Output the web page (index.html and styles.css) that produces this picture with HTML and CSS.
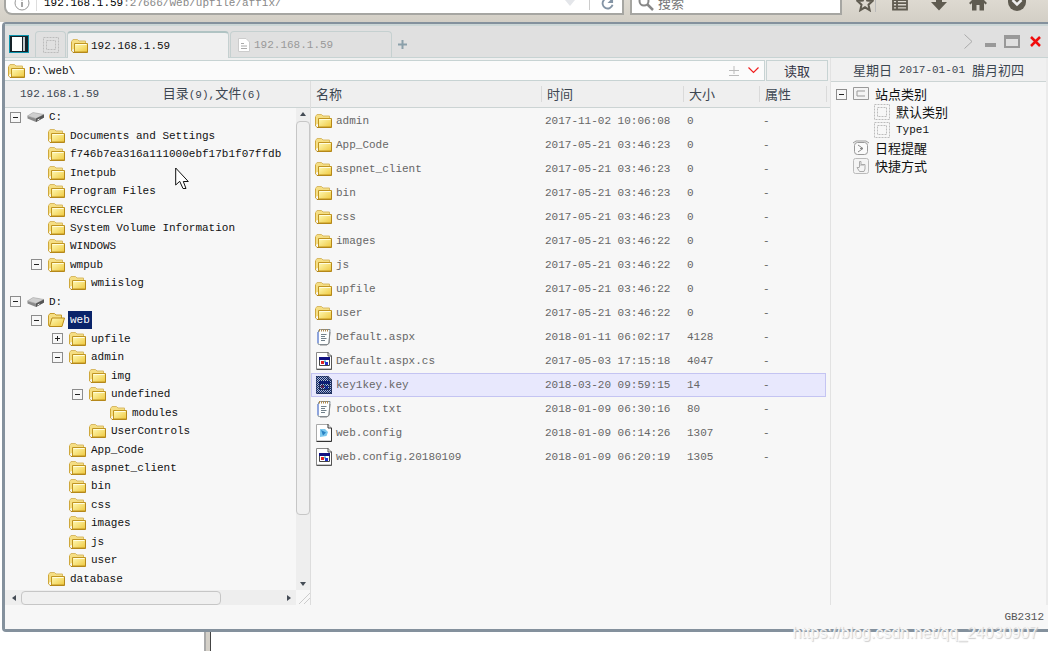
FILE: index.html
```html
<!DOCTYPE html>
<html lang="zh-CN">
<head>
<meta charset="utf-8">
<title>D:\web\</title>
<link rel="stylesheet" href="styles.css">
</head>
<body>
<svg class="sprite" aria-hidden="true">
  <defs>
    <linearGradient id="gold" x1="0" y1="0" x2="1" y2="1"><stop offset="0" stop-color="#fffbb8"/><stop offset="1" stop-color="#efc83e"/></linearGradient>
    <pattern id="dither" width="2" height="2" patternUnits="userSpaceOnUse"><path fill="#0a246a" d="M0 0h1v1H0zM1 1h1v1H1z"/></pattern>
  </defs>
  <symbol id="folder" viewBox="0 0 17 16">
    <path d="M.5 12V3.500L2 1.500h4.500L8 3h6.500v3" fill="#f5de83" stroke="#d8b965"/>
    <path d="M.5 4v9l2 1.500" fill="none" stroke="#cfa83c"/>
    <path d="M3.500 5.500h13v8.500h-13z" fill="url(#gold)" stroke="#c19521"/>
    <path d="M4.500 6.500h11" stroke="#fffde0"/>
    <path d="M2 14.500h14.500v-8" fill="none" stroke="#b5881a"/>
  </symbol>
  <symbol id="folder-open" viewBox="0 0 17 16">
    <path d="M.5 13V3.500L2 1.500h4.500L8 3h5.500v3L12 14H1z" fill="#f5de83" stroke="#c79d2d"/>
    <path d="M4 6h12.500l-2.500 8.500H1.500z" fill="url(#gold)" stroke="#b98a18"/>
  </symbol>
  <symbol id="drive" viewBox="0 0 18 12">
    <path d="M.5 5L6 2l11 1.500v3L9 11 .5 7.500z" fill="#8b8b8b"/>
    <path d="M.5 5L6 1.500 17 3.500 9 7.500z" fill="#cfcfcf" stroke="#aaa" stroke-width=".6"/>
    <path d="M9 7.500V11l8-4.500v-3z" fill="#555"/><path d="M10.500 9l2-1" stroke="#eee"/>
  </symbol>
  <symbol id="note" viewBox="0 0 16 18">
    <path d="M2.500 3Q3 1.500 4.500 1.500H14l-1 13.500q-.2 1.500-2 1.500H3.500Q1.500 16.500 2 15z" fill="#fdfefe" stroke="#7a8a95"/>
    <path d="M2 4v11" stroke="#8ea4dc" stroke-width="2"/>
    <path d="M3.500 1v2.500M5.500 1v2.500M7.500 1v2.500M9.500 1v2.500M11.500 1v2.500" stroke="#b08a50"/>
    <path d="M5 6.500h5.500M5 8.500h4M5 10.500h5.500M5 12.500h4" stroke="#71808a"/>
    <path d="M14 4l-1 11-2 2H4" fill="none" stroke="#888"/>
  </symbol>
  <symbol id="app" viewBox="0 0 16 18">
    <path d="M.5.5H12L15.500 4v13H.5z" fill="#fff" stroke="#888"/>
    <path d="M12 0v4h4M15.500 4v13.500H.5" fill="none" stroke="#555"/>
    <path d="M3.500 5.500h10v8h-10z" fill="#fff" stroke="#444"/><path d="M3 5h11v3H3z" fill="#101080"/>
    <path d="M5 9h3v3H5z" fill="#d22"/><path d="M8 8.500h2v2H8z" fill="#4bb8c8"/><path d="M9 10h3v3H9z" fill="#2233cc"/>
  </symbol>
  <symbol id="app-picked" viewBox="0 0 16 18"><use href="#app" width="16" height="18"/><path d="M0 0h12l4 4v14H0z" fill="#0a246a" opacity=".3"/><path d="M0 0h12l4 4v14H0z" fill="url(#dither)"/></symbol>
  <symbol id="config" viewBox="0 0 16 18">
    <path d="M.5.5H12L15.500 4v13H.5z" fill="#fff" stroke="#aaa"/><path d="M12 0v4h3.500v13.500H.5" fill="none" stroke="#333"/>
    <path d="M4 5h5l3 3-1.500 4L4 13z" fill="#7cc8ee"/><path d="M5 6l5 2.500-3 3z" fill="#2a82c4"/>
  </symbol>
  <symbol id="dotted" viewBox="0 0 16 16">
    <path d="M.5.5h15v15H.5z" fill="none" stroke="#bcbcbc" stroke-dasharray="2 1"/><path d="M3.500 3.500h9v9h-9z" fill="none" stroke="#bcbcbc" stroke-dasharray="2 1"/>
  </symbol>
</svg>

<header class="browser">
  <div class="address">
    <svg class="info" viewBox="0 0 16 16"><circle cx="8" cy="8" r="7" fill="none" stroke="#999"/><path d="M8 3.500v2M8 7v5" stroke="#888" stroke-width="1.500"/></svg>
    <span class="url"><b>192.168.1.59</b>:27666/web/upfile/affix/</span>
    <svg class="drop" viewBox="0 0 10 8"><path d="M0 1h10L5 7z" fill="#e4e6ea"/></svg>
    <button class="reload" aria-label="刷新"><svg viewBox="0 0 14 14"><path d="M11.500 4A5.500 5.500 0 1 0 12.500 9" fill="none" stroke="#8494a5" stroke-width="2"/><path d="M13 1v6H7z" fill="#8494a5"/></svg></button>
  </div>
  <label class="search"><svg viewBox="0 0 16 16"><circle cx="6" cy="6" r="4.500" fill="none" stroke="#888" stroke-width="2"/><path d="M9.500 9.500L15 15" stroke="#888" stroke-width="2.500"/></svg><input type="text" placeholder="搜索" aria-label="搜索"></label>
  <nav class="tools">
    <button aria-label="收藏"><svg viewBox="0 0 18 18"><path d="M9 1.500l2.200 5 5.300.5-4 3.700 1.200 5.500L9 13.300l-4.700 2.900 1.200-5.500-4-3.700 5.300-.5z" fill="none" stroke="#5f5b50" stroke-width="2"/></svg></button>
    <button aria-label="书签"><svg viewBox="0 0 18 18"><path d="M2 1.500h14v14H2zM2 6h14M2 9.200h14M2 12.400h14M6 2v13" fill="none" stroke="#5f5b50" stroke-width="1.800"/></svg></button>
    <button aria-label="下载"><svg viewBox="0 0 18 18"><path d="M6 0h6v8h5l-8 8.500L1 8h5z" fill="#5f5b50"/></svg></button>
    <button aria-label="主页"><svg viewBox="0 0 18 18"><path d="M9 0l9 9-1.500 1.500L15 9v7.500h-4.500V11h-3v5.500H3V9l-1.500 1.500L0 9z" fill="#5f5b50"/></svg></button>
    <button aria-label="更多"><svg viewBox="0 0 18 18"><path d="M0 0h18v8a9 9 0 0 1-18 0z" fill="#5f5b50"/><path d="M4.500 6L9 10.500 13.500 6" fill="none" stroke="#eee" stroke-width="2.500"/></svg></button>
  </nav>
</header>

<main class="window">
  <div class="titlebar">
    <button class="toggle-pane" aria-label="侧栏"><svg viewBox="0 0 20 18"><path d="M0 0h20v18H0z" fill="#0c93ad"/><path d="M1 1h18v16H1z" fill="#152128"/><path d="M3 2h10v14H3z" fill="#fff"/><path d="M14 2h2v14h-2z" fill="#c4cacd"/></svg></button>
    <button class="tab small" aria-label="站点"><svg class="i16"><use href="#dotted"/></svg></button>
    <button class="tab active"><svg class="i17"><use href="#folder"/></svg>192.168.1.59</button>
    <button class="tab idle"><svg class="page" viewBox="0 0 12 14"><path d="M.5.5H8L11.500 4v9.500H.5z" fill="#fff" stroke="#ccc"/><path d="M3 5.500h3M3 8h6M3 10.500h6" stroke="#aaa"/></svg>192.168.1.59</button>
    <button class="add" aria-label="新建"><svg viewBox="0 0 9 9"><path d="M4.500 0v9M0 4.500h9" stroke="#8ba0aa" stroke-width="2"/></svg></button>
    <div class="controls">
      <button aria-label="下一个"><svg width="9" height="15" viewBox="0 0 9 15"><path d="M.5.5l7.500 7-7.500 7" fill="none" stroke="#aaa"/></svg></button>
      <button aria-label="最小化"><svg width="11" height="15" viewBox="0 0 11 15"><path d="M0 9h11v4H0z" fill="#999"/></svg></button>
      <button aria-label="最大化"><svg width="16" height="13" viewBox="0 0 16 13"><path d="M1 1h14v11H1z" fill="none" stroke="#999" stroke-width="2"/><path d="M0 0h16v4H0z" fill="#999"/></svg></button>
      <button aria-label="关闭"><svg width="11" height="11" viewBox="0 0 11 11"><path d="M1 1l9 9M10 1l-9 9" stroke="#f00c0c" stroke-width="2.500"/></svg></button>
    </div>
  </div>

  <div class="content">
    <section class="files">
      <div class="pathbar">
        <div class="path">
          <svg class="i17"><use href="#folder"/></svg>
          <input type="text" value="D:\web\" aria-label="路径">
          <svg class="plusminus" viewBox="0 0 10 12"><path d="M5 1v8M0 5.500h10M0 10.500h10" fill="none" stroke="#bbb"/></svg>
          <button class="chev" aria-label="历史"><svg viewBox="0 0 11 7"><path d="M.5.5l5 5 5-5" fill="none" stroke="#f02020" stroke-width="1.200"/></svg></button>
        </div>
        <button class="read">读取</button>
      </div>
      <div class="panes">
        <div class="left">
          <div class="left-head"><span>192.168.1.59</span><span><i>目录</i>(9),<i>文件</i>(6)</span></div>
          <div class="scroller">
            <ul class="tree">
              <li class="l0"><button class="box" aria-label="折叠"></button><svg class="drive"><use href="#drive"/></svg><span>C:</span></li>
              <li class="l1"><svg class="i17"><use href="#folder"/></svg><span>Documents and Settings</span></li>
              <li class="l1"><svg class="i17"><use href="#folder"/></svg><span>f746b7ea316a111000ebf17b1f07ffdb</span></li>
              <li class="l1"><svg class="i17"><use href="#folder"/></svg><span>Inetpub</span></li>
              <li class="l1"><svg class="i17"><use href="#folder"/></svg><span>Program Files</span></li>
              <li class="l1"><svg class="i17"><use href="#folder"/></svg><span>RECYCLER</span></li>
              <li class="l1"><svg class="i17"><use href="#folder"/></svg><span>System Volume Information</span></li>
              <li class="l1"><svg class="i17"><use href="#folder"/></svg><span>WINDOWS</span></li>
              <li class="l1"><button class="box" aria-label="折叠"></button><svg class="i17"><use href="#folder"/></svg><span>wmpub</span></li>
              <li class="l2"><svg class="i17"><use href="#folder"/></svg><span>wmiislog</span></li>
              <li class="l0"><button class="box" aria-label="折叠"></button><svg class="drive"><use href="#drive"/></svg><span>D:</span></li>
              <li class="l1"><button class="box" aria-label="折叠"></button><svg class="i17"><use href="#folder-open"/></svg><span class="chosen">web</span></li>
              <li class="l2"><button class="box plus" aria-label="展开"></button><svg class="i17"><use href="#folder"/></svg><span>upfile</span></li>
              <li class="l2"><button class="box" aria-label="折叠"></button><svg class="i17"><use href="#folder"/></svg><span>admin</span></li>
              <li class="l3"><svg class="i17"><use href="#folder"/></svg><span>img</span></li>
              <li class="l3"><button class="box" aria-label="折叠"></button><svg class="i17"><use href="#folder"/></svg><span>undefined</span></li>
              <li class="l4"><svg class="i17"><use href="#folder"/></svg><span>modules</span></li>
              <li class="l3"><svg class="i17"><use href="#folder"/></svg><span>UserControls</span></li>
              <li class="l2"><svg class="i17"><use href="#folder"/></svg><span>App_Code</span></li>
              <li class="l2"><svg class="i17"><use href="#folder"/></svg><span>aspnet_client</span></li>
              <li class="l2"><svg class="i17"><use href="#folder"/></svg><span>bin</span></li>
              <li class="l2"><svg class="i17"><use href="#folder"/></svg><span>css</span></li>
              <li class="l2"><svg class="i17"><use href="#folder"/></svg><span>images</span></li>
              <li class="l2"><svg class="i17"><use href="#folder"/></svg><span>js</span></li>
              <li class="l2"><svg class="i17"><use href="#folder"/></svg><span>user</span></li>
              <li class="l1"><svg class="i17"><use href="#folder"/></svg><span>database</span></li>
            </ul>
            <div class="vbar"><svg viewBox="0 0 6 4"><path d="M0 4l3-4 3 4z" fill="#444b55"/></svg><div class="vthumb"></div><svg viewBox="0 0 6 4"><path d="M0 0l3 4 3-4z" fill="#444b55"/></svg></div>
            <div class="hbar"><svg viewBox="0 0 4 6"><path d="M4 0L0 3l4 3z" fill="#444b55"/></svg><div class="hthumb"></div><svg viewBox="0 0 4 6"><path d="M0 0l4 3-4 3z" fill="#444b55"/></svg></div>
            <svg class="grip" viewBox="0 0 14 14"><path d="M3 14L14 3M8 14l6-6" stroke="#ccc"/></svg>
          </div>
        </div>
        <div class="list">
          <table>
            <colgroup><col><col class="c-time"><col class="c-size"><col class="c-attr"><col class="c-end"></colgroup>
            <thead><tr><th><span>名称</span></th><th><span>时间</span></th><th><span>大小</span></th><th><span>属性</span></th><th><span></span></th></tr></thead>
            <tbody>
              <tr><td><svg class="i17"><use href="#folder"/></svg>admin</td><td>2017-11-02 10:06:08</td><td>0</td><td>-</td></tr>
              <tr><td><svg class="i17"><use href="#folder"/></svg>App_Code</td><td>2017-05-21 03:46:23</td><td>0</td><td>-</td></tr>
              <tr><td><svg class="i17"><use href="#folder"/></svg>aspnet_client</td><td>2017-05-21 03:46:23</td><td>0</td><td>-</td></tr>
              <tr><td><svg class="i17"><use href="#folder"/></svg>bin</td><td>2017-05-21 03:46:23</td><td>0</td><td>-</td></tr>
              <tr><td><svg class="i17"><use href="#folder"/></svg>css</td><td>2017-05-21 03:46:23</td><td>0</td><td>-</td></tr>
              <tr><td><svg class="i17"><use href="#folder"/></svg>images</td><td>2017-05-21 03:46:22</td><td>0</td><td>-</td></tr>
              <tr><td><svg class="i17"><use href="#folder"/></svg>js</td><td>2017-05-21 03:46:22</td><td>0</td><td>-</td></tr>
              <tr><td><svg class="i17"><use href="#folder"/></svg>upfile</td><td>2017-05-21 03:46:22</td><td>0</td><td>-</td></tr>
              <tr><td><svg class="i17"><use href="#folder"/></svg>user</td><td>2017-05-21 03:46:22</td><td>0</td><td>-</td></tr>
              <tr><td><svg class="doc"><use href="#note"/></svg>Default.aspx</td><td>2018-01-11 06:02:17</td><td>4128</td><td>-</td></tr>
              <tr><td><svg class="doc"><use href="#app"/></svg>Default.aspx.cs</td><td>2017-05-03 17:15:18</td><td>4047</td><td>-</td></tr>
              <tr class="hot"><td><svg class="doc"><use href="#app-picked"/></svg>key1key.key</td><td>2018-03-20 09:59:15</td><td>14</td><td>-</td></tr>
              <tr><td><svg class="doc"><use href="#note"/></svg>robots.txt</td><td>2018-01-09 06:30:16</td><td>80</td><td>-</td></tr>
              <tr><td><svg class="doc"><use href="#config"/></svg>web.config</td><td>2018-01-09 06:14:26</td><td>1307</td><td>-</td></tr>
              <tr><td><svg class="doc"><use href="#app"/></svg>web.config.20180109</td><td>2018-01-09 06:20:19</td><td>1305</td><td>-</td></tr>
            </tbody>
          </table>
        </div>
      </div>
    </section>
    <aside class="side">
      <div class="date"><i>星期日</i> 2017-01-01 <i>腊月初四</i></div>
      <ul class="sites">
        <li><button class="box" aria-label="折叠"></button><svg class="i16" viewBox="0 0 16 16"><path d="M.5 1.500h15v12H.5z" fill="#f4f4f4" stroke="#999"/><path d="M12 5H4v5h8" fill="none" stroke="#999"/></svg><i>站点类别</i></li>
        <li class="sub"><svg class="i16"><use href="#dotted"/></svg><i>默认类别</i></li>
        <li class="sub"><svg class="i16"><use href="#dotted"/></svg>Type1</li>
        <li class="plain"><svg class="i16" viewBox="0 0 16 16"><rect x="1.500" y="2.500" width="13" height="12" rx="3" fill="#fafafa" stroke="#999"/><path d="M0 3l3-2h10l3 2" fill="none" stroke="#999"/><path d="M5 5l5 3.500L5 12M10 8.500H7" fill="none" stroke="#888"/></svg><i>日程提醒</i></li>
        <li class="plain"><svg class="i16" viewBox="0 0 16 16"><rect x=".5" y=".5" width="15" height="15" rx="2" fill="#f4f4f4" stroke="#bbb"/><path d="M6.500 9V3.500h1.500V8M8 6.500h2V8M10 6.500h2V11l-1 2.500H6.500L4 9.500h2.500" fill="none" stroke="#aaa"/></svg><i>快捷方式</i></li>
      </ul>
    </aside>
  </div>
  <footer class="status">GB2312</footer>
</main>
<div class="below"><div class="divider"></div></div>
<svg class="cursor" viewBox="0 0 14 23"><path d="M.7 1v17l4-3.700L8 21.500h3l-2.700-7h5z" fill="#fff" stroke="#111"/></svg>
<div class="watermark">https://blog.csdn.net/qq_24030907</div>
</body>
</html>
```

FILE: styles.css
```css
* { box-sizing: border-box; }
body {
  margin: 0;
  height: 100vh;
  display: flex;
  flex-direction: column;
  overflow: hidden;
  background: #fff;
  color: #111;
  font: 11px/16px "Liberation Mono", "Noto Sans CJK SC", monospace;
}
svg { display: block; flex: none; }
i { font: 13px/16px "Noto Sans CJK SC", sans-serif; }
ul { list-style: none; margin: 0; padding: 0; }
button { border: 0; padding: 0; background: none; font: inherit; color: inherit; display: flex; align-items: center; }
input { border: 0; padding: 0; background: none; font: inherit; color: inherit; min-width: 0; outline: 0; }
.sprite { position: absolute; width: 0; height: 0; }
.i16 { width: 16px; height: 16px; }
.i17 { width: 17px; height: 16px; }

/* Browser bar */
.browser {
  display: flex;
  flex: none;
  height: 32px;
  margin-top: -10px;
  padding-bottom: 7px;
  background: linear-gradient(#e2ded6, #d3cfc6);
}
.address, .search { display: flex; align-items: center; background: #fff; border: 2px solid #a6a6a2; border-top: 0; padding-top: 3px; }
.address { flex: 1; margin-left: 4px; border-radius: 0 0 0 8px; padding-left: 8px; padding-right: 8px; }
.info { width: 16px; height: 16px; }
.url { flex: 1; margin-left: 6px; padding-left: 7px; border-left: 1px solid #ddd; color: #888; }
.url b { font-weight: normal; color: #000; }
.drop { width: 10px; height: 8px; margin-right: 14px; }
.reload { border-left: 1px solid #ccc; padding-left: 11px; }
.reload svg { width: 13px; height: 14px; }
.search { width: 212px; margin-left: 6px; padding-left: 6px; }
.search svg { width: 16px; height: 16px; }
.search input { flex: 1; margin-left: 4px; font: 13px/16px "Noto Sans CJK SC", sans-serif; }
.search input::placeholder { color: #777; opacity: 1; }
.tools { display: flex; width: 206px; padding-left: 14px; gap: 21px; align-items: flex-start; }
.tools svg { width: 18px; height: 18px; margin-top: 4px; }
.tools button:first-child { margin-right: -6px; padding-right: 1px; border-right: 1px solid #bbb; }

/* Window frame */
.window {
  flex: 1;
  min-height: 0;
  margin-left: 2px;
  display: flex;
  flex-direction: column;
  background: #f7f7f7;
  border: 3px solid #84919d;
  border-top-width: 2px;
  border-right: 0;
  border-radius: 4px 0 0 4px;
}
.titlebar {
  display: flex;
  flex: none;
  align-items: flex-end;
  height: 34px;
  padding: 0 7px 0 4px;
  background: #e0e0e0;
  border-top: 2px solid #cbd6d6;
  border-bottom: 1px solid #c7d3d3;
}
.toggle-pane { margin: 0 6px 4px 0; }
.toggle-pane svg { width: 20px; height: 18px; }
.tab { height: 26px; border: 1px solid #c5d0d0; border-bottom: 0; border-radius: 4px 4px 0 0; }
.tab.small { width: 31px; justify-content: center; margin-right: 1px; }
.tab.active { width: 162px; padding-left: 3px; gap: 3px; background: #f0f0f0; border-top: 2px solid #b0c3c3; margin-bottom: -1px; height: 27px; }
.tab.idle { width: 162px; padding-left: 7px; gap: 4px; margin-left: 1px; color: #999; }
.page { width: 12px; height: 14px; }
.add { margin: 0 0 8px 6px; }
.add svg { width: 9px; height: 9px; }
.controls { display: flex; align-items: center; margin-left: auto; margin-bottom: 8px; gap: 12px; }
.controls button:nth-child(3) { margin-left: -4px; }
.controls button:nth-child(4) { margin-left: -2px; }

.content { flex: 1; min-height: 0; display: flex; }
.files { flex: 1; min-width: 0; display: flex; flex-direction: column; }
.pathbar { display: flex; gap: 1px; height: 23px; padding: 2px 2px 0 0; background: #f0f0f0; }
.path { flex: 1; display: flex; align-items: center; padding: 0 5px 0 3px; background: #fbfbfb; border: 1px solid #c7d3d3; border-left: 0; }
.path input { flex: 1; margin-left: 4px; }
.plusminus { width: 10px; height: 12px; margin-right: 9px; }
.chev svg { width: 11px; height: 7px; }
.read { width: 62px; justify-content: center; border: 1px solid #c7d3d3; font: 13px/16px "Noto Sans CJK SC", sans-serif; color: #334; }

/* Tree */
.panes { flex: 1; min-height: 0; display: flex; }
.left { width: 305px; flex: none; display: flex; flex-direction: column; }
.left-head { display: flex; justify-content: space-between; align-items: center; height: 27px; padding: 0 49px 0 15px; background: #efefef; border-bottom: 1px solid #ccd4d4; color: #3c4651; }
.scroller { flex: 1; min-height: 0; display: grid; grid-template: minmax(0, 1fr) 15px / minmax(0, 1fr) 14px; }
.tree { display: grid; grid-auto-rows: minmax(0, 1fr); padding-bottom: 2px; }
.tree li { display: flex; align-items: center; justify-content: flex-start; white-space: pre; }
.tree span { margin-left: 3px; padding: 1px 2px; }
.tree .drive { width: 18px; height: 12px; }
.tree .box + svg { margin-left: 6px; }
.l0 { padding-left: 5px; }
.l1 { padding-left: 43px; }
.l2 { padding-left: 64px; }
.l3 { padding-left: 84px; }
.l4 { padding-left: 105px; }
.l0 .drive + span { margin-left: 2px; }
.l1 .box, .l2 .box, .l3 .box { margin-left: -17px; }
.tree .chosen { background: #0a246a; color: #fff; }
.box { width: 11px; height: 11px; flex: none; border: 1px solid #8c8c8c; background: linear-gradient(#222, #222) center / 5px 1px no-repeat; }
.box.plus { background: linear-gradient(#222, #222) center / 5px 1px no-repeat, linear-gradient(#222, #222) center / 1px 5px no-repeat; }
.vbar, .hbar { display: flex; align-items: center; background: #eee; }
.vbar { flex-direction: column; padding: 4px 0; gap: 5px; justify-content: space-between; }
.vbar svg { width: 6px; height: 4px; }
.vthumb { width: 14px; flex: 0 1 394px; margin-bottom: auto; background: #f0f0f0; border: 1px solid #c6c6c6; border-radius: 4px; }
.hbar { padding: 0 5px 0 7px; gap: 5px; }
.hbar svg { width: 4px; height: 6px; }
.hthumb { width: 200px; height: 14px; margin-right: auto; background: #f0f0f0; border: 1px solid #c6c6c6; border-radius: 4px; }
.grip { width: 14px; height: 14px; }

/* File list */
.list { flex: 1; min-width: 0; border-left: 1px solid #ddd; }
table { width: 100%; table-layout: fixed; border-collapse: separate; border-spacing: 0; color: #666; }
.c-time { width: 142px; }
.c-size { width: 76px; }
.c-attr { width: 67px; }
.c-end { width: 4px; }
th { height: 27px; padding: 0; background: #efefef; border-bottom: 1px solid #ccd4d4; text-align: left; font: 13px/16px "Noto Sans CJK SC", sans-serif; color: #3c4651; }
th span { display: block; height: 16px; padding-left: 5px; border-left: 1px solid #dadada; }
th:first-child span { border-left: 0; }
tbody::before { content: ""; display: block; height: 1px; }
td { height: 24px; padding: 0 0 0 4px; white-space: pre; line-height: 22px; border: 1px solid transparent; border-width: 1px 0; }
td:first-child { display: flex; align-items: center; gap: 4px; padding-left: 3px; border-left-width: 1px; }
.doc { width: 16px; height: 18px; margin: 0 0 0 1px; }
.hot td { background: #e8e8fd; border-color: #c4c4f2; }
.hot td:last-child { border-right: 1px solid #c4c4f2; }

/* Sites */
.side { width: 218px; flex: none; border-left: 1px solid #e2e2e2; border-right: 2px solid #ebebeb; }
.date { display: flex; gap: 7px; align-items: center; justify-content: center; height: 24px; background: #f0f0f0; border-bottom: 1px solid #ccd4d4; color: #3c4651; }
.sites { display: grid; grid-auto-rows: 18px; padding: 3px 0 0 5px; }
.sites li { display: flex; align-items: center; gap: 6px; }
.sites .sub { padding-left: 38px; }
.sites .plain { padding-left: 17px; }

.status { flex: none; height: 24px; padding: 4px 4px 0 0; text-align: right; color: #555; }
.below { flex: none; height: 19px; padding-left: 204px; }
.divider { width: 7px; height: 19px; background: #d4d0c8; border-left: 2px solid #aaa; border-right: 1px solid #444; }
.cursor { position: absolute; left: 175px; top: 167px; width: 14px; height: 23px; }
.watermark { position: absolute; right: 10px; bottom: 9px; font: 16px/18px "Liberation Sans", sans-serif; color: #f7f7f7; text-shadow: 1px 1px 1px #ccc; }
```
